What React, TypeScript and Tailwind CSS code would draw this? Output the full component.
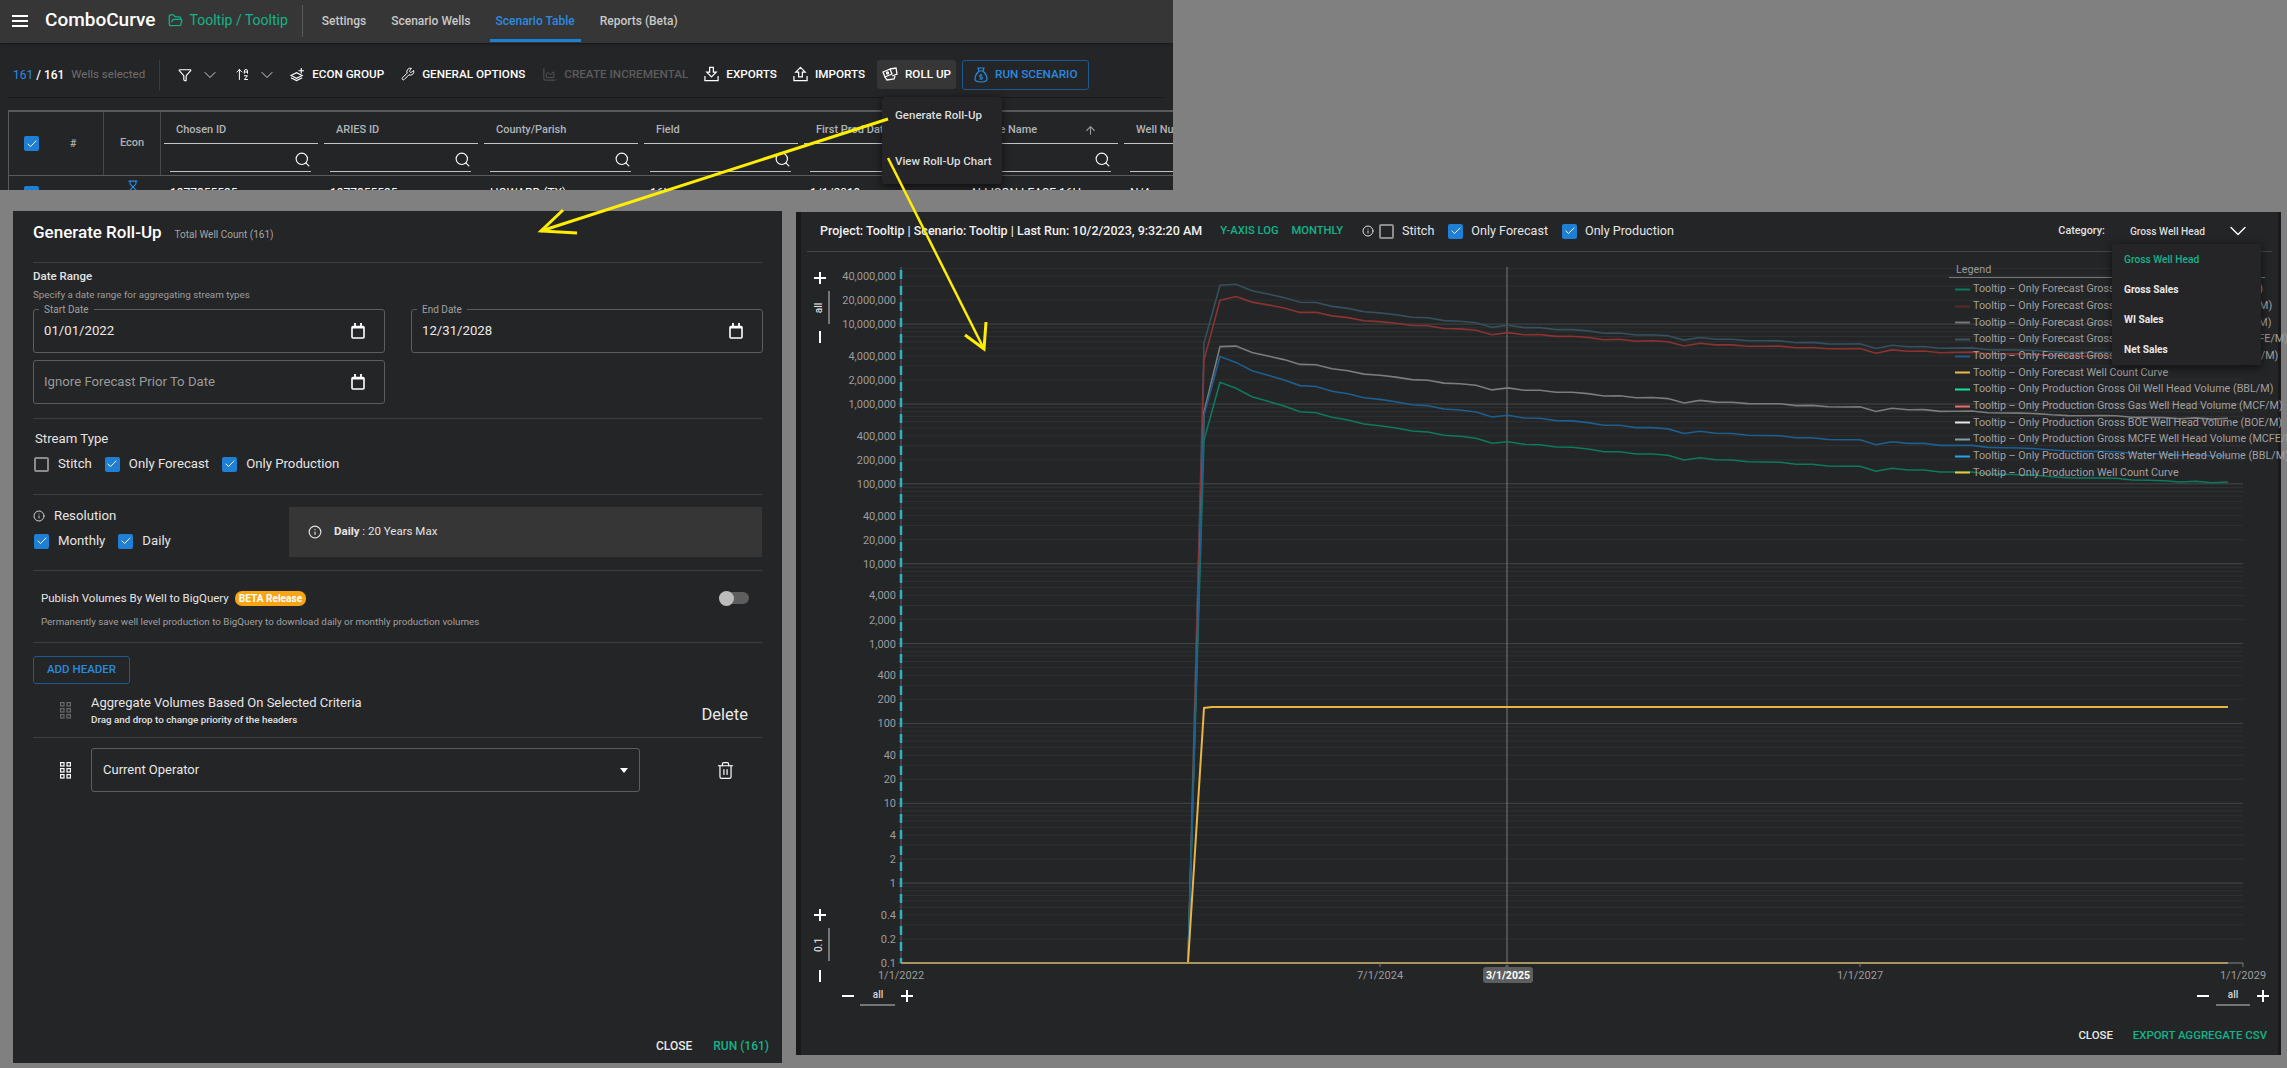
import { ArrowUp, ArrowUpAZ, ChartArea, ChevronDown, Check, Filter, FolderOpen, Hourglass, Info, Search, Trash2, Wrench } from "lucide-react";

const navItems = ["Settings", "Scenario Wells", "Scenario Table", "Reports (Beta)"];

const columns = [
  { label: "Chosen ID", value: "1377855535" },
  { label: "ARIES ID", value: "1377855535" },
  { label: "County/Parish", value: "HOWARD (TX)" },
  { label: "Field", value: "16H" },
  { label: "First Prod Date", value: "1/1/2019" },
  { label: "Lease Name", value: "ALLISON LEASE 16H", sorted: true },
  { label: "Well Number", value: "N/A" },
];

const legendItems = [
  { name: "Tooltip – Only Forecast Gross Oil Well Head Volume (BBL/M)", color: "#0c7a5e" },
  { name: "Tooltip – Only Forecast Gross Gas Well Head Volume (MCF/M)", color: "#5a2a2a" },
  { name: "Tooltip – Only Forecast Gross BOE Well Head Volume (BOE/M)", color: "#777777" },
  { name: "Tooltip – Only Forecast Gross MCFE Well Head Volume (MCFE/M)", color: "#3d5461" },
  { name: "Tooltip – Only Forecast Gross Water Well Head Volume (BBL/M)", color: "#1d5c8c" },
  { name: "Tooltip – Only Forecast Well Count Curve", color: "#e9b949" },
  { name: "Tooltip – Only Production Gross Oil Well Head Volume (BBL/M)", color: "#14e0a8" },
  { name: "Tooltip – Only Production Gross Gas Well Head Volume (MCF/M)", color: "#ee6a64" },
  { name: "Tooltip – Only Production Gross BOE Well Head Volume (BOE/M)", color: "#e6e6e6" },
  { name: "Tooltip – Only Production Gross MCFE Well Head Volume (MCFE/M)", color: "#7f9fb0" },
  { name: "Tooltip – Only Production Gross Water Well Head Volume (BBL/M)", color: "#27a5ec" },
  { name: "Tooltip – Only Production Well Count Curve", color: "#e8c93c" },
];

// monthly shape of the lowest curve, everything else is an offset of it
const shape = [
  547, 565, 590, 604, 618, 635, 638, 652, 660, 672, 677, 684, 693, 696, 706, 709, 715, 730, 725, 733, 734, 741, 742,
  747, 755, 755, 762, 762, 766, 780, 773, 779, 780, 785, 786, 787, 793, 793, 798, 799, 799, 814, 805, 810, 810, 816,
  816, 816, 822, 823, 824, 826, 830, 833, 834, 834, 835, 840, 841, 842, 846, 844, 848, 846,
];

const series = [
  { color: "#35505f", first: 343, a: 97, b: 30 },
  { color: "#8c3331", first: 360, a: 82, b: 42 },
  { color: "#7c7c7c", first: 412, a: 35.7, b: 28 },
  { color: "#0c7a5e", first: 440, a: 0, b: 0 },
  { color: "#1c5f90", first: 415, a: 25.7, b: 1 },
];

const curvePath = (first: number, a: number, b: number) => {
  const pts = shape.map((v, i) => `${1220 + 16 * i} ${(200 + v / 3 - a - b * Math.pow(i / 63, 0.35)).toFixed(1)}`);
  return `M1188 963 L1204 ${first} L${pts.join(" L")}`;
};

const yOf = (v: number) => 963 - (Math.log10(v) + 1) * 79.86;

const yLabels = [
  ["40,000,000", 4e7], ["20,000,000", 2e7], ["10,000,000", 1e7], ["4,000,000", 4e6], ["2,000,000", 2e6], ["1,000,000", 1e6],
  ["400,000", 4e5], ["200,000", 2e5], ["100,000", 1e5], ["40,000", 4e4], ["20,000", 2e4], ["10,000", 1e4],
  ["4,000", 4e3], ["2,000", 2e3], ["1,000", 1e3], ["400", 400], ["200", 200], ["100", 100],
  ["40", 40], ["20", 20], ["10", 10], ["4", 4], ["2", 2], ["1", 1], ["0.4", 0.4], ["0.2", 0.2], ["0.1", 0.1],
] as const;

const gridValues: { v: number; major: boolean }[] = [];
for (let d = -1; d <= 7; d++) {
  for (let m = 1; m <= 9; m++) {
    const v = m * Math.pow(10, d);
    if (yOf(v) > 267) gridValues.push({ v, major: m === 1 });
  }
}

const CheckBox = ({ checked = true }: { checked?: boolean }) =>
  checked ? (
    <span className="flex h-[15px] w-[15px] shrink-0 items-center justify-center rounded-[2px] bg-[#1f7fd4]">
      <Check size={12} strokeWidth={2} className="text-white" />
    </span>
  ) : (
    <span className="h-[15px] w-[15px] shrink-0 rounded-[2px] border-2 border-[#8c8c8c]" />
  );

const LabeledCheck = ({ label, checked = true, small }: { label: string; checked?: boolean; small?: boolean }) => (
  <span className={small ? "flex items-center gap-[8px] text-[12.6px] text-[#e4e4e4]" : "flex items-center gap-[9px] text-[13.2px] text-[#e4e4e4]"}>
    <CheckBox checked={checked} />
    {label}
  </span>
);

const DragGrid = ({ className }: { className: string }) => (
  <svg width="11" height="17" viewBox="0 0 11 17" fill="none" stroke="currentColor" strokeWidth="1.2" className={className}>
    <rect x="0.6" y="0.6" width="3.4" height="3.4" />
    <rect x="7" y="0.6" width="3.4" height="3.4" />
    <rect x="0.6" y="6.6" width="3.4" height="3.4" />
    <rect x="7" y="6.6" width="3.4" height="3.4" />
    <rect x="0.6" y="12.6" width="3.4" height="3.4" />
    <rect x="7" y="12.6" width="3.4" height="3.4" />
  </svg>
);

const CalendarIcon = () => (
  <svg width="14" height="16" viewBox="0 0 14 16" fill="none" stroke="#fff" strokeWidth="1.6">
    <rect x="1" y="3.5" width="12" height="11.5" rx="1" />
    <path d="M1 4.5H13" strokeWidth="2" />
    <path d="M4 0V3M10 0V3" strokeWidth="1.8" />
  </svg>
);

const DateField = ({ label, value, hint }: { label?: string; value?: string; hint?: string }) => (
  <div className="relative flex h-[44px] items-center justify-between rounded-[3px] border border-[#5c5d5f] pl-[10px] pr-[19px]">
    {label && (
      <span className="absolute -top-[7px] left-[5px] bg-[#242527] px-[5px] text-[10px] leading-[13px] text-[#a0a0a0]">{label}</span>
    )}
    <span className={value ? "text-[13.2px] text-[#e8e8e8]" : "text-[13.2px] text-[#9a9a9a]"}>{value ?? hint}</span>
    <CalendarIcon />
  </div>
);

const ToolButton = ({ icon, label, className }: { icon: React.ReactNode; label: string; className: string }) => (
  <span className={`flex items-center gap-[7px] text-[11.7px] font-medium ${className}`}>
    {icon}
    {label}
  </span>
);

const TopWindow = () => (
  <div className="absolute left-0 top-0 flex h-[190px] w-[1173px] flex-col overflow-hidden bg-[#242527]">
    <header className="flex h-[43px] shrink-0 items-center bg-[#363636] pb-[2px] shadow-[0_1px_3px_#0006]">
      <svg width="16" height="12" viewBox="0 0 16 12" className="ml-[12px]" fill="#fff">
        <rect width="16" height="2" />
        <rect y="5" width="16" height="2" />
        <rect y="10" width="16" height="2" />
      </svg>
      <span className="ml-[17px] text-[19px] font-medium text-white">ComboCurve</span>
      <FolderOpen size={15} className="ml-[12px] text-[#12b48a]" />
      <span className="ml-[7px] text-[14px] text-[#12b48a]">Tooltip / Tooltip</span>
      <span className="ml-[14px] h-[32px] w-px bg-[#5a5a5a]" />
      <nav className="ml-[13px] flex h-[43px] gap-[13px]">
        {navItems.map((item) => (
          <span
            key={item}
            className={
              item === "Scenario Table"
                ? "flex h-full items-center border-b-[3px] border-[#1f7fd4] px-[6px] pt-[3px] text-[12px] font-medium text-[#2a8ae0]"
                : "flex h-full items-center px-[6px] text-[12px] font-medium text-[#c8c8c8]"
            }
          >
            {item}
          </span>
        ))}
      </nav>
    </header>

    <div className="mx-[8px] flex h-[55px] shrink-0 items-center border-b border-[#19191a] pt-[10px] pb-[1px]">
      <span className="ml-[5px] text-[12px]">
        <span className="text-[#2a8ae0]">161</span>
        <span className="font-medium text-white"> / 161</span>
      </span>
      <span className="ml-[7px] text-[11.5px] text-[#6e6e6e]">Wells selected</span>
      <span className="ml-[14px] h-[30px] w-px bg-[#3c3c3e]" />
      <Filter size={14} className="ml-[18px] text-white" />
      <ChevronDown size={20} strokeWidth={1.2} className="ml-[8px] text-[#d0d0d0]" />
      <ArrowUpAZ size={15} strokeWidth={1.6} className="ml-[15px] text-white" />
      <ChevronDown size={20} strokeWidth={1.2} className="ml-[7px] text-[#d0d0d0]" />
      <ToolButton
        className="ml-[13px] text-white"
        label="ECON GROUP"
        icon={
          <svg width="15" height="15" viewBox="0 0 16 16" fill="none" stroke="#fff" strokeWidth="1.2">
            <path d="M1 9l6-3 6 3-6 3z" />
            <path d="M1 11.5l6 3 6-3" />
            <path d="M12 1v6M9 4h6" />
          </svg>
        }
      />
      <ToolButton className="ml-[17px] text-white" label="GENERAL OPTIONS" icon={<Wrench size={14} strokeWidth={1.7} />} />
      <ToolButton className="ml-[17px] text-[#5c5c5c]" label="CREATE INCREMENTAL" icon={<ChartArea size={15} strokeWidth={1.4} />} />
      <ToolButton
        className="ml-[16px] text-white"
        label="EXPORTS"
        icon={
          <svg width="15" height="16" viewBox="0 0 16 16" fill="none" stroke="#fff" strokeWidth="1.3">
            <path d="M6 1h4v5h3l-5 5-5-5h3z" />
            <path d="M1 10v5h14v-5" />
          </svg>
        }
      />
      <ToolButton
        className="ml-[16px] text-white"
        label="IMPORTS"
        icon={
          <svg width="15" height="16" viewBox="0 0 16 16" fill="none" stroke="#fff" strokeWidth="1.3">
            <path d="M8 1l5 5h-3v5H6V6H3z" />
            <path d="M1 10v5h14v-5" />
          </svg>
        }
      />
      <ToolButton
        className="ml-[12px] h-[29px] rounded-[3px] bg-[#363636] px-[5px] text-white"
        label="ROLL UP"
        icon={
          <svg width="16" height="15" viewBox="0 0 16 15" fill="none" stroke="#fff" strokeWidth="1.3">
            <path d="M1 5l7-3 2 5-7 3z" />
            <path d="M8 2l6-1 1 6-5 2" />
            <path d="M3 10l2 3 7-1 1-3" />
            <circle cx="5.5" cy="6" r="1" />
          </svg>
        }
      />
      <ToolButton
        className="ml-[6px] h-[30px] rounded-[3px] border border-[#1c5a92] px-[11px] text-[#2a8ae0]"
        label="RUN SCENARIO"
        icon={
          <svg width="14" height="16" viewBox="0 0 14 16" fill="none" stroke="#2a8ae0" strokeWidth="1.2">
            <path d="M4 1h6L9 4H5z" />
            <path d="M5 4C2 7 1 10 1 12c0 2 2 3 6 3s6-1 6-3c0-2-1-5-4-8" />
            <path d="M8.5 8H6.2a1 1 0 0 0 0 2h1.6a1 1 0 0 1 0 2H5.5M7 7v6" strokeWidth="0.9" />
          </svg>
        }
      />
    </div>

    <div className="ml-[8px] mt-[12px] flex min-h-0 flex-1 flex-col border-l border-t-2 border-[#5a5a5c]">
      <div className="flex h-[64px] shrink-0 border-b border-[#5a5a5c]">
        <div className="flex w-[95px] shrink-0 items-center border-r border-[#48484a] pl-[15px]">
          <CheckBox />
          <span className="ml-[31px] text-[10.5px] font-medium text-[#b0b0b0]">#</span>
        </div>
        <div className="flex w-[57px] shrink-0 items-center justify-center border-r border-[#48484a] text-[11px] font-medium text-[#b0b0b0]">
          Econ
        </div>
        {columns.map((col) => (
          <div key={col.label} className="flex w-[160px] shrink-0 flex-col px-[3px]">
            <div className="flex h-[32px] shrink-0 items-center justify-between border-b border-[#c4c4c4] pl-[12px] pr-[21px] pt-[6px] text-[11px] font-medium whitespace-nowrap text-[#aeb4ba]">
              {col.label}
              {col.sorted && <ArrowUp size={13} className="text-[#9a9a9a]" />}
            </div>
            <div className="ml-[6px] mr-[7px] flex h-[28px] items-center justify-end border-b border-[#c4c4c4] pt-[3px]">
              <Search size={17} strokeWidth={1.6} className="text-white" />
            </div>
          </div>
        ))}
      </div>
      <div className="flex pt-[10px] text-[12px] text-white">
        <div className="w-[95px] shrink-0 pl-[15px]">
          <CheckBox />
        </div>
        <div className="flex w-[57px] shrink-0 justify-center">
          <Hourglass size={14} className="-mt-[6px] text-[#2a8ae0]" />
        </div>
        {columns.map((col) => (
          <div key={col.label} className="w-[160px] shrink-0 pl-[9px] leading-[14px] whitespace-nowrap">
            {col.value}
          </div>
        ))}
      </div>
    </div>

    {/* open Roll Up menu */}
    <div className="absolute left-[882px] top-[97px] flex h-[87px] w-[120px] flex-col gap-[32px] rounded-[3px] bg-[#252527] px-[13px] pt-[11px] text-[11.5px] font-medium leading-[14px] whitespace-nowrap text-[#dcdcdc] shadow-[0_2px_8px_#000a]">
      <span>Generate Roll-Up</span>
      <span>View Roll-Up Chart</span>
    </div>
  </div>
);

const RollUpPanel = () => (
  <div className="absolute left-[13px] top-[211px] flex h-[852px] w-[769px] flex-col bg-[#242527] px-[20px]">
    <div className="flex h-[52px] shrink-0 items-baseline gap-[13px] border-b border-[#3e3f41] pt-[9px]">
      <h2 className="text-[17px] font-medium text-white">Generate Roll-Up</h2>
      <span className="text-[10px] text-[#a4a4a4]">Total Well Count (161)</span>
    </div>

    <section className="h-[156px] shrink-0 border-b border-[#3e3f41] pt-[5px]">
      <h3 className="text-[11.5px] font-medium leading-[16px] text-[#e4e4e4]">Date Range</h3>
      <p className="mt-[4px] text-[9.8px] leading-[14px] text-[#9c9c9c]">Specify a date range for aggregating stream types</p>
      <div className="mt-[7px] grid grid-cols-[352px_352px] gap-x-[26px] gap-y-[7px]">
        <DateField label="Start Date" value="01/01/2022" />
        <DateField label="End Date" value="12/31/2028" />
        <DateField hint="Ignore Forecast Prior To Date" />
      </div>
    </section>

    <section className="h-[76px] shrink-0 border-b border-[#3e3f41] pl-[1px] pt-[12px]">
      <h3 className="pl-[1px] text-[13.2px] leading-[16px] text-[#e4e4e4]">Stream Type</h3>
      <div className="mt-[9px] flex h-[16px] items-center gap-[13px]">
        <LabeledCheck label="Stitch" checked={false} />
        <LabeledCheck label="Only Forecast" />
        <LabeledCheck label="Only Production" />
      </div>
    </section>

    <section className="flex h-[76px] shrink-0 border-b border-[#3e3f41] pt-[12px]">
      <div className="w-[256px] shrink-0">
        <div className="flex items-center gap-[9px] pt-[1px] text-[13.2px] leading-[16px] text-[#e4e4e4]">
          <Info size={12} className="text-[#d0d0d0]" />
          Resolution
        </div>
        <div className="mt-[9px] flex h-[16px] items-center gap-[13px] pl-[1px]">
          <LabeledCheck label="Monthly" />
          <LabeledCheck label="Daily" />
        </div>
      </div>
      <div className="flex h-[50px] flex-1 items-center gap-[12px] bg-[#363636] pl-[19px] text-[11.5px] text-[#e4e4e4]">
        <Info size={14} className="text-[#e0e0e0]" />
        <span>
          <b className="font-bold">Daily</b> : 20 Years Max
        </span>
      </div>
    </section>

    <section className="relative h-[72px] shrink-0 border-b border-[#3e3f41] pl-[8px] pt-[19px]">
      <div className="flex items-center gap-[6px] text-[11.5px] leading-[16px] text-[#e4e4e4]">
        Publish Volumes By Well to BigQuery
        <span className="rounded-[7px] bg-[#f7a416] px-[4px] text-[10.1px] font-bold leading-[15px] text-white">BETA Release</span>
      </div>
      <p className="mt-[9px] text-[9.8px] leading-[14px] text-[#a0a0a0]">
        Permanently save well level production to BigQuery to download daily or monthly production volumes
      </p>
      <span className="absolute right-[13px] top-[21px] flex h-[12px] w-[30px] items-center rounded-full bg-[#5e5e5e]">
        <span className="h-[15px] w-[15px] rounded-full bg-[#bcbcbc]" />
      </span>
    </section>

    <button className="mt-[13px] flex h-[28px] w-[97px] shrink-0 items-center justify-center rounded-[3px] border border-[#1c5a92] text-[11.5px] font-medium text-[#2a8ae0]">
      ADD HEADER
    </button>

    <div className="flex h-[54px] shrink-0 items-center border-b border-[#3e3f41] pb-[1px]">
      <DragGrid className="ml-[27px] text-[#6a6a6a]" />
      <div className="ml-[20px]">
        <div className="text-[13px] leading-[18px] text-[#e4e4e4]">Aggregate Volumes Based On Selected Criteria</div>
        <div className="mt-[1px] text-[9.8px] font-medium leading-[14px] text-[#e0e0e0]">Drag and drop to change priority of the headers</div>
      </div>
      <span className="ml-auto mr-[14px] pt-[10px] text-[16.5px] text-[#e8e8e8]">Delete</span>
    </div>

    <div className="mt-[10px] flex h-[44px] shrink-0 items-center">
      <DragGrid className="ml-[27px] text-white" />
      <div className="ml-[20px] flex h-[44px] w-[549px] items-center justify-between rounded-[3px] border border-[#5c5d5f] pl-[11px] pr-[11px] text-[13px] text-[#e8e8e8]">
        Current Operator
        <span className="h-0 w-0 border-x-[4px] border-t-[5px] border-x-transparent border-t-white" />
      </div>
      <Trash2 size={19} strokeWidth={1.5} className="ml-[76px] text-white" />
    </div>

    <div className="-mr-[7px] mt-auto flex justify-end gap-[21px] pb-[9px] text-[12px] font-medium leading-[16px]">
      <span className="text-[#e8e8e8]">CLOSE</span>
      <span className="text-[#12b48a]">RUN (161)</span>
    </div>
  </div>
);

const PlusMinus = ({ x, y, plus }: { x: number; y: number; plus?: boolean }) => (
  <g stroke="#fff" strokeWidth="2">
    <path d={`M${x - 6} ${y}H${x + 6}`} />
    {plus && <path d={`M${x} ${y - 6}V${y + 6}`} />}
  </g>
);

const ChartDrawing = () => (
  <svg width="1477" height="768" viewBox="801 252 1477 768" className="block" fontFamily="Roboto, sans-serif">
    {gridValues.map(({ v, major }) => (
      <path key={v} d={`M898 ${yOf(v).toFixed(1)}H2243`} stroke={major ? "#454648" : "#2f3032"} strokeWidth="1" />
    ))}
    <path d="M901 267V963" stroke="#626365" strokeWidth="1" />
    <path d="M901 270V963" stroke="#2bb4c2" strokeWidth="2.5" strokeDasharray="9 7" />
    {yLabels.map(([label, v]) => (
      <text key={label} x="896" y={yOf(v) + 4} textAnchor="end" fontSize="11" fill="#9c9c9c">
        {label}
      </text>
    ))}

    <path d="M1507 267V963" stroke="#7a7a7a" strokeWidth="1" />
    {series.map((s) => (
      <path key={s.color} d={curvePath(s.first, s.a, s.b)} fill="none" stroke={s.color} strokeWidth="1.6" />
    ))}
    <path d="M1188 963L1204 708L1212 707H2228" fill="none" stroke="#e8b444" strokeWidth="2" />
    <path d="M901 963H2228" stroke="#a8945f" strokeWidth="2" />
    <path d="M2228 963H2243V967M1380 963V967M1860 963V967" fill="none" stroke="#77787a" strokeWidth="1" />

    <text x="901" y="979" textAnchor="middle" fontSize="11" fill="#9c9c9c">1/1/2022</text>
    <text x="1380" y="979" textAnchor="middle" fontSize="11" fill="#9c9c9c">7/1/2024</text>
    <text x="1860" y="979" textAnchor="middle" fontSize="11" fill="#9c9c9c">1/1/2027</text>
    <text x="2243" y="979" textAnchor="middle" fontSize="11" fill="#9c9c9c">1/1/2029</text>
    <path d="M1504 968L1507 964L1510 968Z" fill="#5e5e5e" />
    <rect x="1483" y="967" width="50" height="16" rx="3" fill="#5e5e5e" />
    <text x="1508" y="979" textAnchor="middle" fontSize="10.5" fontWeight="700" fill="#fff">3/1/2025</text>

    {/* zoom controls */}
    <PlusMinus x={820} y={278} plus />
    <path d="M829 291V324M829 928V961" stroke="#c8c8c8" strokeWidth="1" />
    <text x="822" y="308" transform="rotate(-90 822 308)" textAnchor="middle" fontSize="10" fontWeight="500" fill="#d8d8d8">all</text>
    <path d="M820 331V343M820 970V982" stroke="#fff" strokeWidth="2" />
    <PlusMinus x={820} y={915} plus />
    <text x="822" y="945" transform="rotate(-90 822 945)" textAnchor="middle" fontSize="10" fontWeight="500" fill="#d8d8d8">0.1</text>
    <PlusMinus x={848} y={996} />
    <text x="878" y="998" textAnchor="middle" fontSize="10" fontWeight="500" fill="#d8d8d8">all</text>
    <path d="M860 1005H895M2216 1005H2250" stroke="#c8c8c8" strokeWidth="1" />
    <PlusMinus x={907} y={996} plus />
    <PlusMinus x={2203} y={996} />
    <text x="2233" y="998" textAnchor="middle" fontSize="10" fontWeight="500" fill="#d8d8d8">all</text>
    <PlusMinus x={2263} y={996} plus />
  </svg>
);

const ChartPanel = () => (
  <div className="absolute left-[796px] top-[212px] flex h-[843px] w-[1485px] bg-[#19191b]">
    <div className="w-[5px] shrink-0" />
    <div className="relative flex w-[1477px] shrink-0 flex-col bg-[#242527]">
      <div className="mx-[6px] flex h-[39.5px] shrink-0 items-center border-b border-[#464749] pl-[13px] pr-[20px] text-[12.5px]">
        <span className="font-medium text-[#f0f0f0]">Project: Tooltip | Scenario: Tooltip | Last Run: 10/2/2023, 9:32:20 AM</span>
        <span className="ml-[18px] text-[11.2px] font-medium text-[#12b48a]">Y-AXIS LOG</span>
        <span className="ml-[13px] text-[11.2px] font-medium text-[#12b48a]">MONTHLY</span>
        <Info size={12} className="ml-[19px] text-[#e0e0e0]" />
        <span className="ml-[5px] flex items-center gap-[14px]">
          <LabeledCheck small label="Stitch" checked={false} />
          <LabeledCheck small label="Only Forecast" />
          <LabeledCheck small label="Only Production" />
        </span>
        <span className="ml-auto text-[10.8px] font-medium text-[#e0e0e0]">Category:</span>
        <span className="ml-[25px] text-[10.2px] font-medium text-[#dcdcdc]">Gross Well Head</span>
        <ChevronDown size={28} strokeWidth={1.2} className="ml-[19px] text-white" />
      </div>

      <ChartDrawing />

      <div className="flex flex-1 items-start justify-end gap-[20px] pr-[11px] pt-[7px] text-[11.4px] font-medium">
        <span className="text-[#e8e8e8]">CLOSE</span>
        <span className="text-[#12b48a]">EXPORT AGGREGATE CSV</span>
      </div>

      {/* legend sits over the plot */}
      <div className="absolute left-[1148px] top-[48px] w-[316px]">
        <div className="h-[18px] border-b border-[#77787a] pl-[7px] pt-[3px] text-[10.75px] leading-[14px] text-[#9a9a9a]">Legend</div>
        <ul className="mt-[3px]">
          {legendItems.map((item) => (
            <li key={item.name} className="flex h-[16.7px] items-center gap-[3px] pl-[6px] text-[10.75px] whitespace-nowrap text-[#a0a0a0]">
              <svg width="15" height="3" className="shrink-0">
                <rect width="15" height="2" y="0.5" fill={item.color} />
              </svg>
              {item.name}
            </li>
          ))}
        </ul>
      </div>

      {/* open category dropdown */}
      <ul className="absolute left-[1311px] top-[32px] w-[149px] rounded-[2px] bg-[#252527] text-[10.2px] font-medium text-[#e8e8e8] shadow-[0_2px_8px_#000a]">
        <li className="flex h-[30.5px] items-center px-[12px] text-[#12b48a]">Gross Well Head</li>
        <li className="flex h-[30.5px] items-center px-[12px] font-bold">Gross Sales</li>
        <li className="flex h-[30px] items-center px-[12px] font-bold">WI Sales</li>
        <li className="flex h-[30px] items-center px-[12px] font-bold">Net Sales</li>
      </ul>
    </div>
    <div className="w-[3px] shrink-0" />
  </div>
);

const Annotations = () => (
  <svg className="pointer-events-none absolute left-0 top-0" width="2287" height="1068" fill="none" stroke="#ffee00" strokeWidth="3">
    <path d="M888 119L541 231" />
    <path d="M563 210L541 231L577 233" />
    <path d="M888 158L984 349" strokeWidth="2.5" />
    <path d="M965 335L984 349L986 322" />
  </svg>
);

const App = () => (
  <div className="relative h-[1068px] w-[2287px] overflow-hidden bg-[#808080] font-[Roboto,sans-serif]">
    <TopWindow />
    <RollUpPanel />
    <ChartPanel />
    <Annotations />
  </div>
);

export default App;
